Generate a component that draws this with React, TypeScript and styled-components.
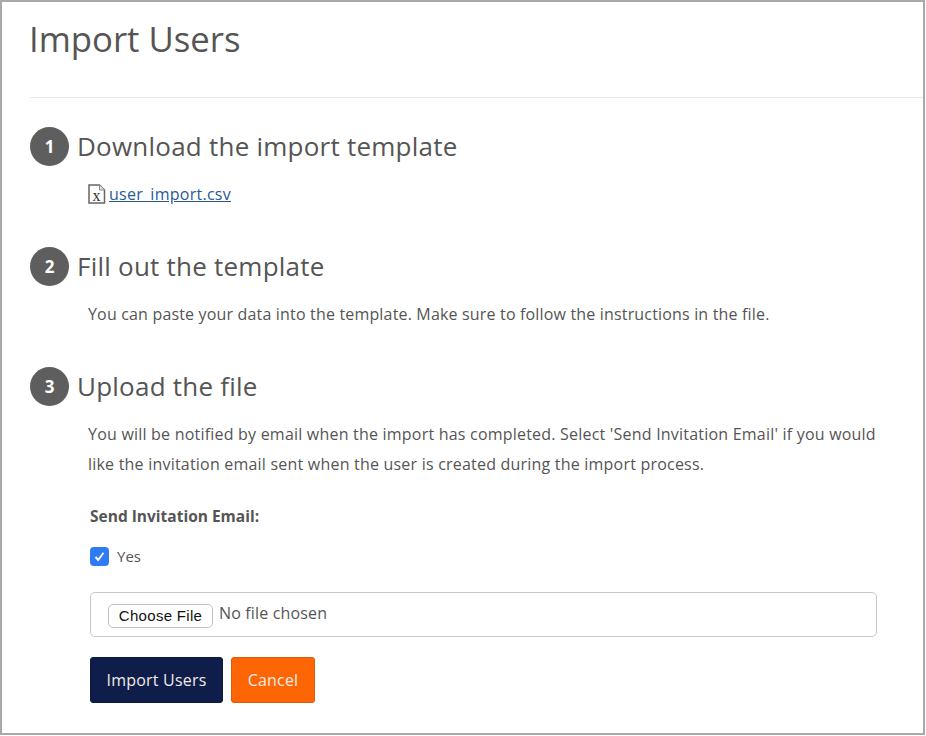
import styled, { createGlobalStyle } from 'styled-components';

const GlobalStyle = createGlobalStyle`
  html, body {
    margin: 0;
    padding: 0;
    background: #fff;
  }
  body {
    font-family: "Open Sans", "Liberation Sans", sans-serif;
    color: #555;
  }
`;

const Frame = styled.div`
  box-sizing: border-box;
  width: 925px;
  height: 735px;
  border: 2px solid #a9a9a9;
  padding-left: 28px;
  overflow: hidden;
  background: #fff;
`;

const Header = styled.header`
  height: 96px;
  box-sizing: border-box;
  padding-top: 12px;
  border-bottom: 1px solid #e8e8e8;
`;

const Title = styled.h1`
  margin: 0 0 0 -1px;
  font-size: 34.7px;
  line-height: 50px;
  font-weight: 400;
  color: #555;
`;

const Step = styled.section<{ $top: number }>`
  margin-top: ${({ $top }) => $top}px;
`;

const StepHeading = styled.div`
  display: flex;
  align-items: center;
  gap: 8px;
  height: 39px;
`;

const StepBadge = styled.span`
  width: 39px;
  height: 39px;
  border-radius: 50%;
  background: #5e5e5e;
  color: #fff;
  font-size: 17px;
  font-weight: 700;
  display: flex;
  align-items: center;
  justify-content: center;
`;

const StepTitle = styled.h2`
  margin: 0;
  font-size: 26px;
  letter-spacing: 0.23px;
  line-height: 39px;
  font-weight: 400;
  color: #555;
`;

const StepBody = styled.div<{ $top?: number }>`
  margin-top: ${({ $top }) => $top ?? 13}px;
  padding-left: 58px;
  padding-right: 46px;
  font-size: 16px;
  line-height: 30px;
  color: #555;
`;

const Paragraph = styled.p<{ $spacing: number }>`
  margin: 0;
  letter-spacing: ${({ $spacing }) => $spacing}px;
`;

const FileRow = styled.div`
  display: flex;
  align-items: center;
  gap: 3px;
  height: 24px;
`;

const FileLink = styled.a`
  color: #2a5a96;
  text-decoration: underline;
  font-size: 16px;
  letter-spacing: 0.27px;
`;

const FieldLabel = styled.div`
  margin-top: 27px;
  margin-left: 2px;
  font-size: 15.5px;
  line-height: 20px;
  font-weight: 700;
  color: #555;
`;

const CheckRow = styled.label`
  display: flex;
  align-items: center;
  gap: 8px;
  margin-top: 20px;
  margin-left: 2px;
  height: 20px;
  font-size: 15px;
`;

const CheckBox = styled.span`
  width: 19px;
  height: 19px;
  border-radius: 4px;
  background: #2f7bf6;
  display: flex;
  align-items: center;
  justify-content: center;
`;

const FileField = styled.div`
  box-sizing: border-box;
  height: 45px;
  margin-top: 26px;
  margin-left: 2px;
  border: 1px solid #c8c8c8;
  border-radius: 5px;
  display: flex;
  align-items: flex-start;
  padding: 10px 0 0 17px;
  gap: 6px;
`;

const ChooseButton = styled.span`
  box-sizing: border-box;
  width: 105px;
  height: 24px;
  margin-top: 1px;
  border: 1px solid #c0c0c0;
  border-radius: 5px;
  background: #fff;
  color: #111;
  font-family: "Liberation Sans", Arial, sans-serif;
  font-size: 15px;
  letter-spacing: 0.3px;
  display: flex;
  align-items: center;
  justify-content: center;
`;

const NoFile = styled.span`
  font-size: 16px;
  letter-spacing: 0.16px;
  line-height: 20px;
`;

const Actions = styled.div`
  display: flex;
  gap: 8px;
  margin-top: 20px;
  margin-left: 2px;
`;

const ActionButton = styled.button<{ $tone: 'navy' | 'orange' }>`
  box-sizing: border-box;
  height: 46px;
  padding: 0;
  width: ${({ $tone }) => ($tone === 'navy' ? '133px' : '84px')};
  border: 1px solid ${({ $tone }) => ($tone === 'navy' ? '#0c1a42' : '#dd5a06')};
  border-radius: 3px;
  background: ${({ $tone }) => ($tone === 'navy' ? '#0f1d4a' : '#fd6505')};
  color: #f0ece6;
  font-family: inherit;
  font-size: 16px;
  letter-spacing: 0.2px;
`;

const XlsIcon = () => (
  <svg width="18" height="20" viewBox="0 0 18 20" fill="none">
    <path d="M1 1H11.5L16.5 6V19H1Z" stroke="#666" strokeWidth="1.5" fill="#fff" />
    <path d="M11.5 1V6H16.5" stroke="#888" strokeWidth="1" fill="#e4e4e4" />
    <text x="8.5" y="16.5" textAnchor="middle" fontFamily="Liberation Serif, serif" fontSize="16" fill="#333">
      x
    </text>
  </svg>
);

export default function App() {
  return (
    <>
      <GlobalStyle />
      <Frame>
        <Header>
          <Title>Import Users</Title>
        </Header>
        <Step $top={29}>
          <StepHeading>
            <StepBadge>1</StepBadge>
            <StepTitle>Download the import template</StepTitle>
          </StepHeading>
          <StepBody $top={16}>
            <FileRow>
              <XlsIcon />
              <FileLink href="#">user_import.csv</FileLink>
            </FileRow>
          </StepBody>
        </Step>
        <Step $top={41}>
          <StepHeading>
            <StepBadge>2</StepBadge>
            <StepTitle>Fill out the template</StepTitle>
          </StepHeading>
          <StepBody>
            <Paragraph $spacing={0.17}>
              You can paste your data into the template. Make sure to follow the instructions in the file.
            </Paragraph>
          </StepBody>
        </Step>
        <Step $top={38}>
          <StepHeading>
            <StepBadge>3</StepBadge>
            <StepTitle>Upload the file</StepTitle>
          </StepHeading>
          <StepBody>
            <Paragraph $spacing={0.21}>
              You will be notified by email when the import has completed. Select 'Send Invitation Email' if you would
              like the invitation email sent when the user is created during the import process.
            </Paragraph>
            <FieldLabel>Send Invitation Email:</FieldLabel>
            <CheckRow>
              <CheckBox>
                <svg width="13" height="13" viewBox="0 0 13 13" fill="none">
                  <path d="M2.5 7L5.2 10L10.5 2.8" stroke="#fff" strokeWidth="1.9" />
                </svg>
              </CheckBox>
              Yes
            </CheckRow>
            <FileField>
              <ChooseButton>Choose File</ChooseButton>
              <NoFile>No file chosen</NoFile>
            </FileField>
            <Actions>
              <ActionButton $tone="navy">Import Users</ActionButton>
              <ActionButton $tone="orange">Cancel</ActionButton>
            </Actions>
          </StepBody>
        </Step>
      </Frame>
    </>
  );
}
